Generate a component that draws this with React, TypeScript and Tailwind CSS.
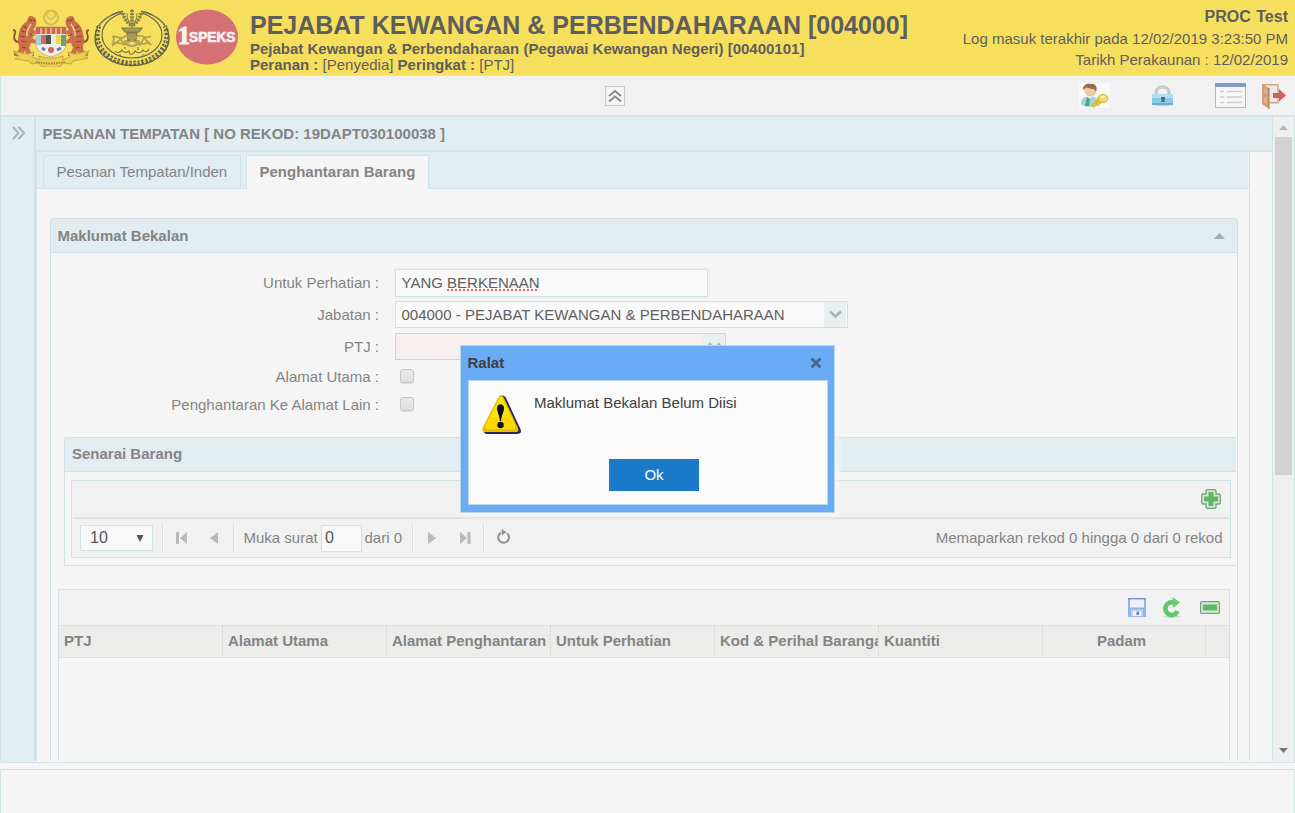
import type { ReactNode } from "react";

const columns = [
  { label: "PTJ", cls: "w-[164px] pl-[5px]" },
  { label: "Alamat Utama", cls: "w-[164px] pl-[5px]" },
  { label: "Alamat Penghantaran", cls: "w-[164px] pl-[5px]" },
  { label: "Untuk Perhatian", cls: "w-[164px] pl-[5px]" },
  { label: "Kod & Perihal Barangan", cls: "w-[164px] pl-[5px]" },
  { label: "Kuantiti", cls: "w-[164px] pl-[5px]" },
  { label: "Padam", cls: "w-[163px] pr-[5px] text-center" },
];

function Tiger() {
  return (
    <g>
      <path d="M15 6c1-3 4-2 6-1 2 1 3 4 2 7 0 3-2 4-3 6l4 1 2-2 1 3-3 3-5-1 1 5 5 2v3l-7-1-2 5 2 4 3 2v2h-7l-2-5-4 5H1v-3c4 0 5-3 5-7-2-3-1-8 0-13 1-6 4-9 8-12z" fill="#cc6f48" />
      <path d="M18 12c-2 4-5 6-4 12" fill="none" stroke="#f0cf9a" strokeWidth="1.500" />
      <path d="M10 14l4 2M8 19l5 1M7 24l5 1M8 29l5 1M16 7l3 2M17 22l4 2M9 35l4 1M20 8l2 1" stroke="#7a4a40" strokeWidth="1.200" />
      <path d="M5 30c-5-1-4-6-3-9 1-2-1-4-2-2" fill="none" stroke="#8f4f38" strokeWidth="1.800" />
    </g>
  );
}

function CoatOfArms() {
  return (
    <svg width="76" height="58" viewBox="0 0 76 58">
      <circle cx="38" cy="8.500" r="7" fill="none" stroke="#d9bb55" strokeWidth="2.200" />
      <circle cx="38" cy="6" r="4.200" fill="#f3d857" stroke="#cfb150" />
      <g transform="translate(0 3)"><Tiger /></g>
      <g transform="translate(76 3) scale(-1 1)"><Tiger /></g>
      <path d="M23 18h30v18c0 6-8 10-15 12-7-2-15-6-15-12z" fill="#f1efe5" stroke="#c8b270" />
      <path d="M23 18h30v7H23z" fill="#cf6260" />
      <path d="M28 19v6M33 19v6M38 19v6M43 19v6M48 19v6" stroke="#f0d05a" strokeWidth="1.500" />
      <path d="M23 26h5v10h-5z" fill="#a8cbd4" />
      <path d="M28 26h5v9h-5z" fill="#d36a66" />
      <path d="M33 26h5v9h-5z" fill="#57564f" />
      <path d="M38 26h5v9h-5z" fill="#eee9dc" />
      <path d="M43 26h5v9h-5z" fill="#f2d54d" />
      <path d="M48 26h5v11h-5z" fill="#6aa476" />
      <circle cx="38" cy="41" r="3" fill="#c96c69" />
      <path d="M29 39l3 2M44 41l4-2" stroke="#617fab" strokeWidth="3" />
      <path d="M0 42l14 3 7-2-2 5 7 3v-4c8 3 16 3 24 0v4l7-3-2-5 7 2 14-3-4 5 3 2-15 3-2 3-8-1-2 3c-6 2-13 2-20 0l-2-3-8 1-2-3-14-2 4-3z" fill="#ecd04f" stroke="#b99b48" strokeWidth=".8" />
      <path d="M23 53c9 2 20 2 29 0" fill="none" stroke="#a68546" strokeWidth="2" strokeDasharray="1.500 1" />
    </svg>
  );
}

function StateCrest() {
  return (
    <svg width="76" height="58" viewBox="0 0 76 58" fill="none" stroke="#60624c">
      <ellipse cx="38" cy="29" rx="37" ry="27.500" strokeWidth="1.400" />
      <ellipse cx="38" cy="26" rx="30" ry="23" strokeWidth="1.100" />
      <path d="M5 17c-7 18 8 37 33 37s40-19 33-37" strokeWidth="4.500" strokeDasharray="2.400 1.600" />
      <path d="M5 17c-7 18 8 37 33 37s40-19 33-37" stroke="#dfcc58" strokeWidth="1" strokeDasharray="3 2" />
      <path d="M29 0h18v15H29z" fill="#f7df5e" stroke="none" />
      <path d="M38 0v19M38 17c-5-3-8-8-9-13M38 17c5-3 8-8 9-13M38 18c-3-3-5-9-5-14M38 18c3-3 5-9 5-14" strokeWidth="1" stroke="#8b864e" />
      <path d="M38 1v15M29 4c1 5 4 9 8 12M47 4c-1 5-4 9-8 12" strokeWidth="4" strokeDasharray="1.800 1.400" stroke="#83804c" />
      <path d="M28 19h20l-3 4H31zM33 24h10l-1 7h-8zM30 32h16" fill="#a59e50" strokeWidth="1.200" stroke="#7b7a4c" />
      <path d="M18 28c5-3 7 4 12 0s7 5 12 0 8 4 15-1M18 35c5-4 9 2 13-1 4 4 10 4 14 0 5 3 7-2 12 1M20 27l-1 9 8-6 3 6 8-5 8 5 4-7 7 7" stroke="#b0a454" strokeWidth="1.800" />
      <path d="M21 42c2 3 6 1 7-1 2 4 6 2 7 1l1 3c3 1 4-1 5-3 3 3 7 2 8-1 2 3 5 2 6-1M31 38v2M44 38v3M25 46h2M48 46h2" strokeWidth="1.100" stroke="#777448" />
    </svg>
  );
}

function SpeksLogo() {
  return (
    <svg width="62" height="56" viewBox="0 0 62 56" className="overflow-visible font-['Liberation_Sans',sans-serif] font-bold">
      <ellipse cx="31" cy="28" rx="31" ry="27.500" fill="#d37174" />
      <text x="2" y="35" fontSize="25" fill="#f7f0ef" fontFamily="Liberation Serif, serif" stroke="#f7f0ef" strokeWidth="1.200" textLength="12" lengthAdjust="spacingAndGlyphs">1</text>
      <text x="13" y="33" fontSize="14.500" fill="#f7f0ef" stroke="#f7f0ef" strokeWidth=".7" textLength="46.500" lengthAdjust="spacingAndGlyphs">SPEKS</text>
    </svg>
  );
}

function UserKeyIcon() {
  return (
    <svg width="31" height="25" viewBox="0 0 31 25" className="bg-[#f8f8f8]">
      <path d="M2 21c0-6 4-8 9-8s9 3 9 8c-4 4-14 4-18 0z" fill="#9fd0e9" />
      <path d="M6 13l4 3 5-3z" fill="#eef4f5" />
      <path d="M8 14l3 2-1 7H6z" fill="#4fa96f" />
      <circle cx="11.500" cy="7.500" r="6" fill="#efc9a5" />
      <path d="M4 6c0-4 4-6 8-5 4-1 7 3 5 8-1-4-5-3-8-4-2-1-3 0-4 2z" fill="#946b4b" />
      <path d="M19 15l-7 7 2 3 3-2 2 0 5-4z" fill="#dfbc3e" />
      <ellipse cx="24" cy="15.500" rx="5" ry="4" fill="#f2da69" stroke="#d3b242" />
      <path d="M22 14h4" stroke="#fff3af" strokeWidth="2" />
    </svg>
  );
}

function LockIcon() {
  return (
    <svg width="21" height="21" viewBox="0 0 21 21">
      <path d="M4 11V8c0-8 13-8 13 0v3" fill="none" stroke="#bdbdbd" strokeWidth="3" />
      <path d="M3.500 10V8c0-7 12-8 13-1" fill="none" stroke="#dadada" />
      <path d="M0 9h21v11c-6 1-15 1-21 0z" fill="#87cbe9" />
      <path d="M0 9h21v4H0z" fill="#b3def0" />
      <path d="M0 18h21v2H0z" fill="#67aed1" />
      <path d="M9 12h4v2l-1 1 1 2H9l1-2-1-1z" fill="#52656d" />
    </svg>
  );
}

function ListIcon() {
  return (
    <svg width="31" height="25" viewBox="0 0 31 25">
      <path d="M.5.500h30v24H.5z" fill="#f7f7f7" stroke="#a9b6d2" />
      <path d="M0 0h31v4H0z" fill="#8299ca" />
      <path d="M5 8.500h4M12 8.500h15M5 14h4M12 14h15M5 19.500h4M12 19.500h15" stroke="#cdcdcd" strokeWidth="1.300" />
    </svg>
  );
}

function DoorIcon() {
  return (
    <svg width="24" height="25" viewBox="0 0 24 25">
      <path d="M1 .700h15v18H7" fill="#ededed" stroke="#d3a37c" strokeWidth="1.400" />
      <path d="M7 2h8v16H7z" fill="#e9e9ea" />
      <path d="M0 0l7 4v21l-7-5z" fill="#d69d73" />
      <path d="M2 4l3 2v5L2 9zM2 13l3 2v5l-3-2z" fill="#ddb48e" />
      <path d="M7 4v21" stroke="#a9744f" />
      <path d="M11 9h6V5l7 6.500-7 6V14h-6z" fill="#d45d60" />
    </svg>
  );
}

function Trigger() {
  return (
    <div className="flex h-[25px] w-[22px] items-center justify-center bg-[#e8eff1]">
      <svg width="13" height="9" viewBox="0 0 13 9" fill="none" stroke="#aeb1b2" strokeWidth="2.600"><path d="M1 1.500l5.500 5 5.500-5" /></svg>
    </div>
  );
}

function Row({ label, children, className }: { label: string; children: ReactNode; className: string }) {
  return (
    <div className={`flex items-center ${className}`}>
      <div className="w-[328px] text-right">{label} :</div>
      {children}
    </div>
  );
}

function Check() {
  return <div className="mb-[2px] ml-[21px] size-[14px] rounded-[3px] border border-[#c6c6c6] bg-linear-to-b from-[#e9e9e9] to-[#e0e0e0] shadow-[0_1px_1px_#ddd]" />;
}

function Sep({ className }: { className: string }) {
  return <div className={`h-[30px] w-[2px] border-l border-[#dedede] bg-[#f8f8f8] ${className}`} />;
}

function Header() {
  return (
    <header className="flex h-[76px] justify-between border-b border-[#d6e2dc] bg-[#f7df5e] text-[#5e5e5e]">
      <div className="flex">
        <div className="flex gap-[5px] pt-[9px] pl-[13px]"><CoatOfArms /><StateCrest /><div className="pl-px"><SpeksLogo /></div></div>
        <div className="pl-[12px] pt-[11px] whitespace-nowrap">
          <h1 className="text-[25px] leading-[29px] font-bold">PEJABAT KEWANGAN &amp; PERBENDAHARAAN [004000]</h1>
          <div className="pt-px text-[15px] leading-4 font-bold">Pejabat Kewangan &amp; Perbendaharaan (Pegawai Kewangan Negeri) [00400101]</div>
          <div className="text-[15px] leading-[16px]"><b>Peranan :</b> [Penyedia] <b>Peringkat :</b> [PTJ]</div>
        </div>
      </div>
      <div className="pt-[6px] pr-[7px] text-right text-[15px] leading-[21px]">
        <div className="text-base leading-[22px] font-bold [word-spacing:1px]">PROC Test</div>
        <div>Log masuk terakhir pada 12/02/2019 3:23:50 PM</div>
        <div>Tarikh Perakaunan : 12/02/2019</div>
      </div>
    </header>
  );
}

function Dialog() {
  return (
    <div className="absolute top-[345px] left-[460px] h-[168px] w-[375px] border border-[#b8d7e6] bg-[#6aabf5] px-[7px] text-[15px] text-[#404040] shadow-[3px_3px_5px_#f9f9f9]">
      <div className="-ml-[0.5px] flex h-[34px] items-center justify-between pr-[5px]">
        <b>Ralat</b>
        <svg width="12" height="12" viewBox="0 0 12 12" stroke="#46688f" strokeWidth="3"><path d="M1.500 1.500l9 9M10.500 1.500l-9 9" /></svg>
      </div>
      <div className="h-[125px] w-[360px] border border-[#b8d7e6] bg-[#fafafa] pt-[13px]">
        <div className="flex h-[65px] pl-[13px]">
          <svg width="40" height="42" viewBox="0 0 40 42">
            <path d="M19 2c2-1 4 0 5 2l14 30c2 4 1 6-3 6H6c-4 0-5-2-3-5z" fill="#292563" />
            <path d="M16 4c2-4 4-4 6 0l14 30c1 3 0 4-3 4H4c-4 0-4-2-3-5z" fill="#e5bd00" />
            <path d="M17 5c1-3 3-3 4 0l12 26c1 2 0 4-3 4H7c-4 0-4-2-3-4z" fill="#fae60a" />
            <path d="M4 34h29l-5-11H9z" fill="#ffd400" />
            <path d="M15 14c0-5 7-5 7 0 0 4-2 6-3 13h-1c-1-7-3-9-3-13z" fill="#10102b" />
            <circle cx="18.500" cy="31" r="3.200" fill="#10102b" />
          </svg>
          <div className="-mt-[2px] ml-[12px]">Maklumat Bekalan Belum Diisi</div>
        </div>
        <button className="ml-[140px] block h-[32px] w-[90px] bg-[#1a79c8] text-white">Ok</button>
      </div>
    </div>
  );
}

function SupplyForm() {
  return (
    <div className="h-[184px] pt-[16px]">
      <Row label="Untuk Perhatian" className="h-[28px]">
        <div className="ml-[16px] flex h-[28px] w-[313px] items-center border border-[#d1e2e5] bg-[#f9f9f9] pl-[5.5px] text-[#606060] shadow-[0_0_3px_#d8e6e8]">
          <span>YANG <span className="underline decoration-[#f06060] decoration-dotted decoration-2 underline-offset-2 [text-decoration-skip-ink:none]">BERKENAAN</span></span>
        </div>
      </Row>
      <Row label="Jabatan" className="mt-[4px] h-[27px] leading-[26px]">
        <div className="ml-[16px] flex h-[27px] w-[453px] items-center justify-between border border-[#d1e2e5] bg-[#f9f9f9] pr-px pl-[5.5px] text-[#606060]">
          <span>004000 - PEJABAT KEWANGAN &amp; PERBENDAHARAAN</span><Trigger />
        </div>
      </Row>
      <Row label="PTJ" className="mt-[5px] h-[27px] leading-[26px]">
        <div className="ml-[16px] flex h-[27px] w-[331px] items-center justify-end border border-[#f8c4c4] bg-[#f7efef]"><Trigger /></div>
      </Row>
      <Row label="Alamat Utama" className="mt-[3px] h-[28px]"><Check /></Row>
      <Row label="Penghantaran Ke Alamat Lain" className="h-[28px]"><Check /></Row>
    </div>
  );
}

function ItemPanel() {
  return (
    <section className="mr-px ml-[13px] h-[129px] border border-r-0 border-[#d3e2e6]">
      <div className="flex h-[34px] items-center border-b border-[#d3e2e6] bg-[#e2edf2] pl-[7px] font-bold">Senarai Barang</div>
      <div className="mt-[8px] mr-[5px] ml-[6px] h-[78px] border border-[#d3e2e6] bg-[#f1f1f1]">
        <div className="mx-px flex h-[38px] items-center justify-end border-b-2 border-[#e1e1e1] pr-[8px]">
          <svg width="20" height="20" viewBox="0 0 20 20">
            <path d="M6 .700h8l1 1v3.300h3.300l1 1v8l-1 1H15v3.300l-1 1H6l-1-1V15H1.700l-1-1V6l1-1H5V1.700z" fill="#d3e8d2" stroke="#79a184" strokeWidth="1.300" />
            <path d="M7.500 3h5v4.500H17v5h-4.500V17h-5v-4.500H3v-5h4.500z" fill="#60b762" />
          </svg>
        </div>
        <div className="flex h-[38px] items-center pr-[7.5px] pl-[8px]">
          <div className="flex h-[26px] w-[73px] items-center justify-between border border-[#d3e2e6] bg-[#f8f8f8] pr-[8px] pl-[9px] text-[16px] text-[#555]">
            10<svg width="8" height="7" viewBox="0 0 8 7" fill="#555"><path d="M.5 0h7L4 7z" /></svg>
          </div>
          <Sep className="ml-[9px]" />
          <svg className="-mt-px ml-[12px]" width="12" height="12" viewBox="0 0 12 12" fill="#b9b9b9"><path d="M0 0h3v12H0zM11 0v12L4 6z" /></svg>
          <svg className="-mt-px ml-[21px]" width="10" height="12" viewBox="0 0 10 12" fill="#b9b9b9"><path d="M9 0v12L1 6z" /></svg>
          <Sep className="ml-[14px]" />
          <span className="ml-[8.5px] w-[77.5px] whitespace-nowrap">Muka surat</span>
          <div className="flex h-[27px] w-[41px] items-center border border-[#d3e2e6] bg-[#f8f8f8] pl-[3px] text-[16px] text-[#555]">0</div>
          <span className="ml-[2.5px] w-[37.5px] whitespace-nowrap">dari 0</span>
          <Sep className="ml-[10px]" />
          <svg className="-mt-px ml-[14px]" width="9" height="12" viewBox="0 0 9 12" fill="#b9b9b9"><path d="M0 0l8 6-8 6z" /></svg>
          <svg className="-mt-px ml-[23px]" width="12" height="12" viewBox="0 0 12 12" fill="#b9b9b9"><path d="M0 0l7 6-7 6zM7.500 0h3v12h-3z" /></svg>
          <Sep className="ml-[11px]" />
          <svg className="-mt-[3px] ml-[10.5px]" width="15" height="15" viewBox="0 0 15 15"><path d="M5 3.700A5.400 5.400 0 1 0 11 4.200" fill="none" stroke="#938f8d" strokeWidth="2" /><path d="M5.500 0l5 3-4.500 3.500z" fill="#938f8d" /></svg>
          <span className="ml-auto">Memaparkan rekod 0 hingga 0 dari 0 rekod</span>
        </div>
      </div>
    </section>
  );
}

function DeliveryTable() {
  return (
    <section className="mt-[23px] mr-[7px] ml-[7px] flex-1 border border-b-0 border-[#d3e2e6]">
      <div className="flex h-[36px] items-center justify-end border-b border-[#dfdfdf] bg-[#f1f1f1] pr-[9px]">
        <svg width="18" height="19" viewBox="0 0 18 19"><path d="M0 0h18v19H0z" fill="#8fb3ea" /><path d="M0 0h18v1.500H0z" fill="#748fcb" /><path d="M2 1.500h14v8H2z" fill="#f0f1f7" /><path d="M3 11.500h12v6.500H3z" fill="#cbd1dc" /><path d="M5 13h8v5H5z" fill="#f3f3f3" /><path d="M8.500 13.500h2.500v3.500H8.500z" fill="#7782a6" /></svg>
        <svg className="ml-[17px]" width="18" height="21" viewBox="0 0 18 21"><ellipse cx="9" cy="19.500" rx="9" ry="1.200" fill="#cfd6cf" /><path d="M14.500 14.200A6.300 6.300 0 1 1 10 5.500" fill="none" stroke="#5fc667" strokeWidth="4.600" /><path d="M9.500 0l7.500 5.500L10 11z" fill="#6ccd73" /></svg>
        <svg className="ml-[19px]" width="20" height="13" viewBox="0 0 20 13"><rect x=".6" y=".6" width="18.800" height="11.800" rx="1.500" fill="#d9ebd8" stroke="#79a184" strokeWidth="1.300" /><path d="M3 3.500h14v6H3z" fill="#60b762" /></svg>
      </div>
      <div className="flex h-[32px] border-b border-[#dfe1e1] bg-[#ececea] font-bold">
        {columns.map((c) => (
          <div key={c.label} className={`h-[30px] overflow-hidden border-r border-dotted border-[#cfcfcf] leading-[30px] whitespace-nowrap ${c.cls}`}>{c.label}</div>
        ))}
      </div>
    </section>
  );
}

function Content() {
  return (
    <div className="flex min-h-0 w-[1213px] flex-1 flex-col border-r border-[#d3e2e6]">
      <div className="flex h-[37px] items-end border-b border-[#d3e2e6] bg-[#e2edf2] pl-[6px]">
        <div className="h-[33px] w-[198px] border border-b-0 border-[#d3e2e6] pl-[12.5px] leading-[32px]">Pesanan Tempatan/Inden</div>
        <div className="relative top-px ml-[5px] h-[34px] w-[183px] border border-b-0 border-[#d3e2e6] bg-[#f5f5f5] pl-[12.5px] leading-[32px] font-bold">Penghantaran Barang</div>
      </div>
      <section className="mt-[29px] mr-[11px] ml-[13px] flex min-h-0 flex-1 flex-col border border-b-0 border-[#d3e2e6]">
        <div className="flex h-[34px] shrink-0 items-center justify-between border-b border-[#d3e2e6] bg-[#e2edf2] pt-px pr-[12px] pl-[6.5px] font-bold">
          Maklumat Bekalan
          <svg width="11" height="6" viewBox="0 0 11 6" fill="#aaaeb0"><path d="M5.500 0L11 6H0z" /></svg>
        </div>
        <SupplyForm />
        <ItemPanel />
        <DeliveryTable />
      </section>
    </div>
  );
}

export default function App() {
  return (
    <div className="relative h-[813px] w-[1295px] overflow-hidden bg-[#f5f5f5] font-['Liberation_Sans',sans-serif] text-[15px] text-[#848484]">
      <Header />
      <div className="flex h-[39px] items-center justify-end border-l border-[#d3e2e6] bg-[#f1f1f1] pr-[9px]">
        <div className="mr-[454px] flex size-[20px] items-center justify-center border border-[#c9c9c9] bg-[#f5f5f5]">
          <svg width="14" height="14" viewBox="0 0 14 14" fill="none" stroke="#868686" strokeWidth="1.800"><path d="M1 7l6-5 6 5M1 12.500l6-5 6 5" /></svg>
        </div>
        <UserKeyIcon />
        <div className="ml-[42px]"><LockIcon /></div>
        <div className="ml-[42px]"><ListIcon /></div>
        <div className="ml-[16px] pt-px"><DoorIcon /></div>
      </div>
      <div className="flex h-[648px] border border-t-2 border-[#d3e2e6]">
        <aside className="w-[33px] bg-[#e2edf2] pt-[9px] pl-[11px]">
          <svg width="14" height="14" viewBox="0 0 14 14" fill="none" stroke="#aeb2b4" strokeWidth="2"><path d="M1 1l5.500 6L1 13M6.500 1L12 7l-5.500 6" /></svg>
        </aside>
        <main className="mb-px flex w-[1239px] flex-col border-r border-l-2 border-[#d3e2e6]">
          <div className="flex h-[33px] shrink-0 items-center bg-[#e2edf2] pt-px pl-[6.500px] font-bold">PESANAN TEMPATAN [ NO REKOD: 19DAPT030100038 ]</div>
          <div className="flex min-h-0 flex-1 flex-col border-t-2 border-l border-[#d3e2e6]">
            <Content />
          </div>
        </main>
        <div className="flex flex-1 flex-col items-center bg-[#efefef]">
          <svg className="mt-[8px]" width="9" height="5" viewBox="0 0 9 5" fill="#b9b9b9"><path d="M4.500 0L9 5H0z" /></svg>
          <div className="mt-[7px] h-[338px] w-[17px] bg-[#d2d2d2]" />
          <svg className="mt-auto mb-[9px]" width="9" height="5" viewBox="0 0 9 5" fill="#777"><path d="M0 0h9L4.500 5z" /></svg>
        </div>
      </div>
      <footer className="mt-[6px] h-[50px] border border-b-0 border-[#d3e2e6]" />
      <Dialog />
    </div>
  );
}
